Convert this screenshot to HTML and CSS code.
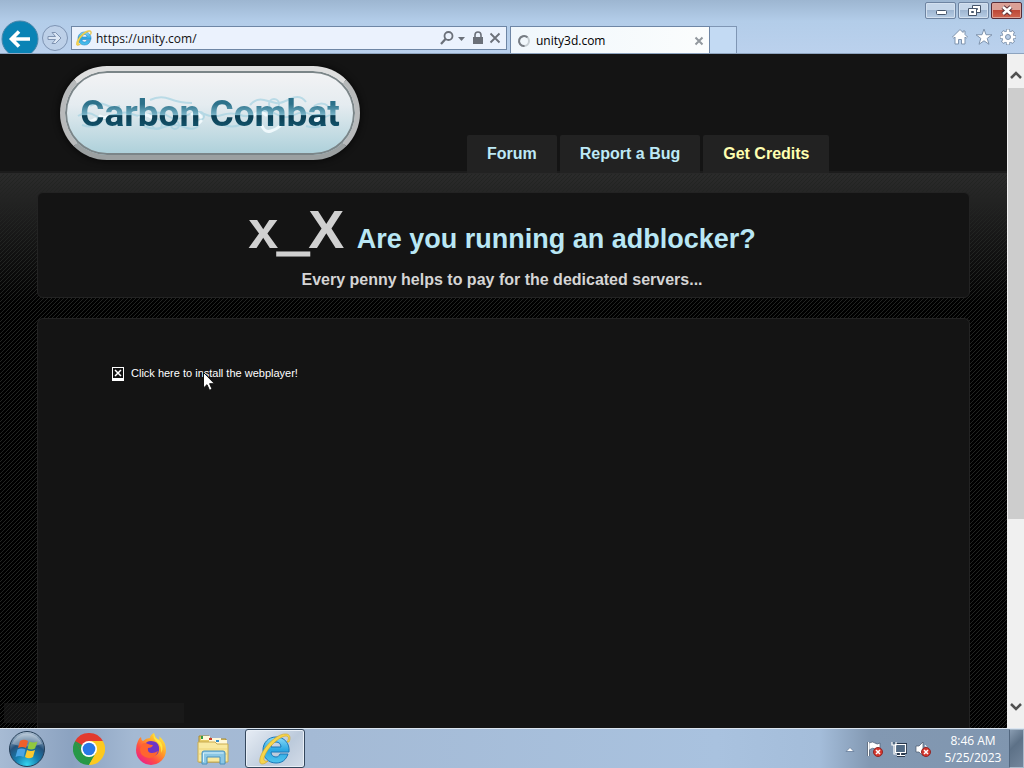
FILE: index.html
```html
<!DOCTYPE html>
<html lang="en">
  <head>
    <meta charset="UTF-8" />
    <meta name="viewport" content="width=device-width, initial-scale=1.0" />
    <title>unity3d.com</title>
    <link rel="stylesheet" href="styles.css">
  </head>
  <body>
    <!-- Browser window frame -->
    <header class="browser">
      <div class="window-buttons">
        <button class="win-btn" aria-label="Minimize">
          <svg width="28" height="15" viewBox="0 0 28 15"><rect x="9.500" y="7.500" width="10" height="4" rx="1" fill="#fff" stroke="#47566b" /></svg>
        </button>
        <button class="win-btn" aria-label="Restore">
          <svg width="28" height="15" viewBox="0 0 28 15" fill="#fff" stroke="#47566b"><path d="M12.500 2.500h8v7h-8z M15.500 5.500h2v1h-2z" fill-rule="evenodd" /><path d="M8.500 5.500h8v7h-8z M11.500 8.500h2v1h-2z" fill-rule="evenodd" /></svg>
        </button>
        <button class="win-btn close" aria-label="Close">
          <svg width="28" height="15" viewBox="0 0 28 15"><path d="M10 4l8 7M18 4l-8 7" stroke="#5d3338" stroke-width="4.500" /><path d="M10 4l8 7M18 4l-8 7" stroke="#fff" stroke-width="2.500" /></svg>
        </button>
      </div>

      <div class="toolbar">
        <button class="back" aria-label="Back">
          <svg width="38" height="38" viewBox="0 0 38 38"><circle cx="19" cy="19" r="18" fill="#0a83b5" stroke="#4a87aa" /><path d="M29 19H11M18 11.500L10.500 19l7.500 7.500" fill="none" stroke="#fff" stroke-width="3.600" /></svg>
        </button>
        <button class="forward" aria-label="Forward">
          <svg width="28" height="28" viewBox="0 0 28 28"><circle cx="14" cy="14" r="12.500" fill="#bdd0e8" stroke="#7e94b3" /><path d="M7 12.500h7.500l-3.500-4h3.500l5.500 5.500-5.500 5.500H11l3.500-4H7z" fill="#dce7f5" stroke="#7e92b0" /></svg>
        </button>

        <div class="address-bar">
          <svg width="16" height="16" viewBox="0 0 32 32"><use href="#ie" /></svg>
          <input type="text" class="address" aria-label="Address" value="https://unity.com/" />
          <button aria-label="Search"><svg width="16" height="16" viewBox="0 0 16 16"><circle cx="9.500" cy="6" r="4" fill="none" stroke="#6b7079" stroke-width="1.800" /><path d="M6.500 9L2 14" stroke="#6b7079" stroke-width="2.200" /></svg></button>
          <button aria-label="Show address list"><svg width="8" height="16" viewBox="0 0 8 16"><path d="M0 7h7l-3.500 4z" fill="#6b7079" /></svg></button>
          <button aria-label="Security report"><svg width="16" height="16" viewBox="0 0 16 16"><rect x="4" y="7" width="10" height="7" fill="#6b7079" /><path d="M6 8V5a3 3 0 0 1 6 0v3" fill="none" stroke="#6b7079" stroke-width="1.600" /></svg></button>
          <button aria-label="Stop"><svg width="14" height="16" viewBox="0 0 14 16"><path d="M2.500 3.500l9 9M11.500 3.500l-9 9" stroke="#6b7079" stroke-width="1.800" /></svg></button>
        </div>

        <div class="tab">
          <svg width="14" height="14" viewBox="0 0 14 14"><circle cx="7" cy="7" r="5" fill="none" stroke="#c6ced3" stroke-width="2" /><path d="M7.500 12A5 5 0 1 1 10.500 3.400" fill="none" stroke="#777d84" stroke-width="2" /></svg>
          <span class="tab-title">unity3d.com</span>
          <button aria-label="Close tab"><svg width="10" height="10" viewBox="0 0 10 10"><path d="M1.500 1.500l7 7M8.500 1.500l-7 7" stroke="#92989e" stroke-width="2" /></svg></button>
        </div>
        <button class="new-tab" aria-label="New tab"></button>

        <div class="tools">
          <button aria-label="Home"><svg width="18" height="18" viewBox="0 0 18 18"><path d="M9 1.500L1.500 9l1.300 1.200L4 9v7h3.500v-4.500h3V16H14V9l1.200 1.200L16.500 9 14 6.500V3h-2v1.500z" fill="#fff" stroke="#7e93ad" /></svg></button>
          <button aria-label="Favorites"><svg width="18" height="18" viewBox="0 0 18 18"><path d="M9 1l2 5.700 6 .1-4.800 3.600 1.800 5.900L9 12.800l-5 3.500 1.800-5.900L1 6.800l6-.1z" fill="#fff" stroke="#7e93ad" /></svg></button>
          <button aria-label="Tools"><svg width="18" height="18" viewBox="0 0 18 18"><g stroke="#7e93ad" stroke-width="4"><path d="M9 1v16M1 9h16M3.300 3.300l11.400 11.400M14.700 3.300L3.300 14.700" /></g><circle cx="9" cy="9" r="6" fill="#fff" stroke="#7e93ad" /><path d="M9 1.500v15M1.500 9h15M3.800 3.800l10.400 10.400M14.200 3.800L3.800 14.200" stroke="#fff" stroke-width="2.500" /><circle cx="9" cy="9" r="2.500" fill="#b9cde6" stroke="#7e93ad" /></svg></button>
        </div>
      </div>
    </header>

    <!-- Web page -->
    <div class="viewport">
      <main class="page">
        <div class="site-header">
          <a href="#" class="logo">
            <!-- water ripples around the name -->
            <svg class="splash" width="272" height="54" viewBox="0 0 272 54" fill="none">
              <g stroke="#9ccfe0" stroke-width="2" opacity=".6">
                <path d="M4 30q9-6 18 0t18 0 18-2 18 0 18 2 18 0 18-2 18 1 18 0 18-2 18 1 18 1 18 0 18 0" />
                <path d="M16 20q8-5 16-1t14 1M76 14q10-5 20-1t22 4M176 19q6-7 14-5t12 3 14-4 16 3M240 20q8-5 14 0" />
                <path d="M8 39q8 3 16 0M70 40q10 5 20 1t20 0 14-1M150 39q8 3 16 0M232 40q9 3 18-1" />
                <circle cx="83" cy="38" r="5" /><circle cx="101" cy="39" r="4" /><circle cx="126" cy="30" r="4" /><circle cx="200" cy="18" r="5" />
              </g>
              <g stroke="#f4fcff" stroke-width="3" stroke-linecap="round" opacity=".9">
                <path d="M10 32q6 6 11 1M26 30q5 3 8 0M66 31q6-4 11 0M118 28q6-3 9 3M124 38l3-3M180 29q7-5 12 0M236 34q6 3 10-2" />
                <path d="M188 40q3 7 9 5t9-5" />
              </g>
            </svg>
            <span class="logo-text">Carbon Combat</span>
          </a>
          <nav class="menu">
            <a href="#">Forum</a>
            <a href="#">Report a Bug</a>
            <a href="#" class="credits">Get Credits</a>
          </nav>
        </div>

        <div class="content">
          <section class="box notice">
            <h1><span class="face">x<span class="mouth">_</span>X</span> Are you running an adblocker?</h1>
            <p>Every penny helps to pay for the dedicated servers...</p>
          </section>
          <section class="box game">
            <a href="#" class="install">
              <svg width="12" height="14" viewBox="0 0 12 14"><rect width="12" height="14" fill="#fff" /><rect x="1" y="1" width="10" height="10" fill="#111" /><path d="M3 3l6 6M9 3l-6 6" stroke="#fff" stroke-width="1.500" /></svg>
              <span>Click here to install the webplayer!</span>
            </a>
          </section>
        </div>
        <div class="status-popup"></div>
      </main>

      <div class="scrollbar">
        <button aria-label="Scroll up"><svg width="12" height="8" viewBox="0 0 12 8"><path d="M1 7l5-5 5 5" fill="none" stroke="#505050" stroke-width="2.500" /></svg></button>
        <div class="track"><div class="thumb"></div></div>
        <button aria-label="Scroll down"><svg width="12" height="8" viewBox="0 0 12 8"><path d="M1 1l5 5 5-5" fill="none" stroke="#505050" stroke-width="2.500" /></svg></button>
      </div>
    </div>

    <!-- Taskbar -->
    <footer class="taskbar">
      <button class="start" aria-label="Start">
        <svg width="38" height="38" viewBox="0 0 38 38">
          <defs>
            <radialGradient id="orb" cx=".5" cy=".95" r=".95"><stop offset="0" stop-color="#35d5ef" /><stop offset=".35" stop-color="#177fb0" /><stop offset=".65" stop-color="#24527c" /><stop offset="1" stop-color="#b6c7d8" /></radialGradient>
          </defs>
          <circle cx="19" cy="19" r="17.500" fill="url(#orb)" stroke="#253e57" />
          <path d="M4 14a16 16 0 0 1 30 0q-14 5-30 0z" fill="#fff" opacity=".3" />
          <path d="M12 11q4-2.500 8 0l-2 7q-4-2-8 0z" fill="#ee602b" />
          <path d="M21.500 11.500q4 2 8 0l-2.500 7q-3.500 2-7.500 0z" fill="#91c83e" />
          <path d="M9.500 19.500q4-2 8 0l-2 7.500q-4-2-8 0z" fill="#4ba5e5" />
          <path d="M19 20q4 2 8 0l-2 7q-4 2.500-8 0z" fill="#fcc92f" />
        </svg>
      </button>

      <button class="task" aria-label="Google Chrome">
        <svg width="32" height="32" viewBox="0 0 32 32">
          <path d="M16 16L2.140 8A16 16 0 0 1 29.860 8z" fill="#e33b2e" />
          <path d="M16 16v16A16 16 0 0 1 2.140 8z" fill="#279847" />
          <path d="M16 16L29.860 8A16 16 0 0 1 16 32z" fill="#fcc91f" />
          <path d="M16 8h13.860L22.930 20z" fill="#fcc91f" />
          <path d="M22.930 20L16 32 9.070 20z" fill="#279847" />
          <path d="M9.070 20L2.140 8H16z" fill="#e33b2e" />
          <path d="M2.140 8L9.070 20H16l-7-8z" fill="#279847" />
          <path d="M22.930 20L16 32l8-2 5-10z" fill="#fcc91f" />
          <circle cx="16" cy="16" r="8" fill="#fff" /><circle cx="16" cy="16" r="6.300" fill="#2878e6" />
        </svg>
      </button>

      <button class="task" aria-label="Firefox">
        <svg width="32" height="32" viewBox="0 0 32 32">
          <defs>
            <linearGradient id="fox" x1=".85" y1=".1" x2=".2" y2=".9"><stop offset="0" stop-color="#ffe63d" /><stop offset=".4" stop-color="#ff9829" /><stop offset=".72" stop-color="#ff4b45" /><stop offset="1" stop-color="#ed2681" /></linearGradient>
          </defs>
          <path d="M3 8q1-3 3-4 0 3 2 4 3-3 7-3 0-3 4-5 1 5 5 7 1-2 0-4 7 6 7 14a15 15 0 0 1-30 0q0-5 2-9z" fill="url(#fox)" />
          <path d="M10 12q1-4 6-4 7 0 8 6 1 7-5 9-6 1-9-3-2-3-1-6 4 2 6-1-4 0-5-1z" fill="#6e35c7" />
          <path d="M7 11q3-2 6 0 2 1 5 1-1 3-5 3-1 5 4 5 3 0 6-2-2 7-9 7-9-1-9-9z" fill="#ff652f" />
          <path d="M19 0q-2 5 3 9 5 4 4 11 4-7-2-13-5-2-5-7z" fill="#ffe541" />
        </svg>
      </button>

      <button class="task" aria-label="Windows Explorer">
        <svg width="32" height="32" viewBox="0 0 32 32">
          <path d="M2 3h10l2 3h15v23H2z" fill="#e6ca65" stroke="#a88b34" />
          <rect x="4" y="3" width="9" height="4" fill="#fff8d8" /><rect x="4" y="3" width="2" height="3" fill="#319b43" />
          <rect x="12" y="5" width="12" height="4" fill="#fff8d8" /><rect x="12" y="5" width="3" height="2" fill="#ce3b28" />
          <rect x="19" y="7" width="11" height="4" fill="#fff8d8" /><rect x="19" y="7" width="3" height="2" fill="#358dc4" />
          <path d="M1 9h17l2 2h11v18H1z" fill="#f8e9a0" stroke="#c9ac50" />
          <path d="M2 16h28M2 21h28" stroke="#eed57a" />
          <path d="M5 31V20q0-2 2-2h19q2 0 2 2v11h-5v-7H10v7z" fill="#8bc7e4" stroke="#4990bd" />
          <path d="M6.500 29V20h20" fill="none" stroke="#d5f1fc" />
        </svg>
      </button>

      <button class="task active" aria-label="Internet Explorer">
        <svg width="32" height="32" viewBox="0 0 32 32">
          <defs>
            <linearGradient id="ieblue" x1="0" y1="0" x2="0" y2="1"><stop offset="0" stop-color="#8bdcf9" /><stop offset=".5" stop-color="#2ba7e2" /><stop offset="1" stop-color="#51c4ee" /></linearGradient>
            <g id="ie">
              <path d="M17 4C9 4 4 10 4 17s5 13 13 13c6 0 10-3 12-9h-8c-1 2-2 3-4 3-3 0-5-2-5-5h18C31 10 25 4 17 4zm-5 10c0-3 2-5 5-5s5 2 5 5z" fill="url(#ieblue)" stroke="#1977b8" stroke-width="1" />
              <path d="M30 9c2-4 1-8-3-8C20 0 8 10 3 20c-3 6-3 11 0 11 2 0 4-1 6-3-5 1-5-2-2-8C12 11 22 3 27 3c3 0 3 3 1 6z" fill="#f7d54b" stroke="#d0a321" stroke-width=".6" />
            </g>
          </defs>
          <use href="#ie" />
        </svg>
      </button>

      <div class="tray">
        <button aria-label="Show hidden icons"><svg width="10" height="16" viewBox="0 0 10 16"><path d="M1 10.500h8L5 6.500z" fill="#fff" stroke="#647b99" stroke-width=".8" /></svg></button>
        <button aria-label="Action Center"><svg width="16" height="16" viewBox="0 0 16 16"><path d="M1.500 1v14" stroke="#35465c" stroke-width="3" /><path d="M2 2q4-2 6 0t5 0v7q-3 1-5-1T2 9z" fill="#fff" stroke="#4c5c72" stroke-width=".7" /><path d="M1.500 1v14" stroke="#fff" stroke-width="1.500" /><circle cx="11" cy="11" r="4.500" fill="#d7382e" stroke="#8f2627" /><path d="M9 9l4 4M13 9l-4 4" stroke="#fff" stroke-width="1.500" /></svg></button>
        <button aria-label="Network"><svg width="16" height="16" viewBox="0 0 16 16"><path d="M4.500 3.500h10v8h-10zM9.500 12v2M6 14.500h8" fill="#6f8299" stroke="#28374b" stroke-width="3" /><path d="M4.500 3.500h10v8h-10zM9.500 12v2M6 14.500h8M1 1v3h4V1M3 4v9h3" fill="#526a84" stroke="#fff" stroke-width="1.200" /></svg></button>
        <button aria-label="Volume"><svg width="16" height="16" viewBox="0 0 16 16"><path d="M1 5h3l4-4v14l-4-4H1z" fill="#fff" stroke="#47566b" stroke-width=".7" /><path d="M10 4q2 2 2 5" fill="none" stroke="#fff" /><circle cx="11" cy="11" r="4.500" fill="#d7382e" stroke="#8f2627" /><path d="M9 9l4 4M13 9l-4 4" stroke="#fff" stroke-width="1.500" /></svg></button>
      </div>
      <div class="clock"><span>8:46 AM</span><span>5/25/2023</span></div>
      <button class="show-desktop" aria-label="Show desktop"></button>
    </footer>

    <svg class="cursor" width="12" height="19" viewBox="0 0 12 19"><path d="M.5.500v15.500l3.500-3.300 2.500 5.600 2.600-1.100-2.500-5.500h4.900z" fill="#fff" stroke="#111" /></svg>
  </body>
</html>
```
FILE: styles.css
```css
* {
  margin: 0;
  padding: 0;
  box-sizing: border-box;
}

body {
  display: flex;
  flex-direction: column;
  height: 100vh;
  overflow: hidden;
  font-family: "Open Sans", "Noto Sans", sans-serif;
  font-size: 12px;
  background: #000;
}

button {
  display: flex;
  align-items: center;
  justify-content: center;
  border: none;
  background: none;
  font: inherit;
}

svg {
  display: block;
  flex-shrink: 0;
}

a {
  text-decoration: none;
}

/* Browser frame */
.browser {
  height: 54px;
  flex-shrink: 0;
  overflow: hidden;
  background: linear-gradient(#9db6d1, #b3cde9 40%, #bbd1ed);
  border-bottom: 1px solid #8ea4bf;
}

.window-buttons {
  display: flex;
  justify-content: flex-end;
  gap: 2px;
  height: 20px;
  padding: 2px 2px 0 0;
}

.win-btn {
  width: 31px;
  height: 17px;
  border: 1px solid #6e84a1;
  border-radius: 2px;
  background: linear-gradient(#c5d6e9 45%, #9fb6d1 50%, #b7cde5);
  box-shadow: inset 0 0 0 1px #d3e0ef;
}

.win-btn.close {
  border-color: #572c37;
  background: linear-gradient(#dba096 45%, #bd4838 50%, #cf6550);
  box-shadow: inset 0 0 0 1px #dda499;
}

.toolbar {
  display: flex;
  align-items: flex-start;
}

.back {
  width: 38px;
  margin-left: 1px;
}

.forward {
  width: 30px;
  height: 36px;
  margin-left: 1px;
}

.address-bar {
  display: flex;
  align-items: center;
  flex: 1;
  height: 24px;
  margin: 6px 3px 0 1px;
  padding: 0 4px;
  gap: 4px;
  background: #ebf2fd;
  border: 1px solid #6e86a5;
}

.address-bar button {
  margin-left: -1px;
}

.address {
  flex: 1;
  min-width: 0;
  border: none;
  outline: none;
  background: none;
  font: inherit;
  color: #111;
}

.tab {
  display: flex;
  align-items: center;
  width: 200px;
  height: 28px;
  margin-top: 6px;
  padding: 0 5px 0 6px;
  gap: 5px;
  background: linear-gradient(to right, #f0f7fc, #fbfdfd);
  border: 1px solid #6e86a5;
  border-bottom: none;
}

.tab-title {
  flex: 1;
}

.new-tab {
  width: 27px;
  height: 28px;
  margin-top: 6px;
  background: #c3daf3;
  border: 1px solid #7f96b4;
  border-width: 1px 1px 0 0;
}

.tools {
  display: flex;
  justify-content: flex-end;
  gap: 6px;
  width: 287px;
  padding: 8px 7px 0 0;
}

/* Page area */
.viewport {
  display: flex;
  flex: 1;
  min-height: 0;
}

.page {
  position: relative;
  display: flex;
  flex-direction: column;
  flex: 1;
  overflow: hidden;
  font-family: "Liberation Sans", Arial, sans-serif;
  background:
    linear-gradient(135deg, transparent 44%, #222422 44%, #222422 56%, transparent 56%) 0 0 / 4px 4px,
    linear-gradient(#2b2b2b 120px, #222 150px, #000 250px);
}

.site-header {
  display: flex;
  justify-content: flex-start;
  align-items: flex-end;
  height: 120px;
  padding-left: 60px;
  background: #141414;
  border-bottom: 1px solid #292929;
  box-shadow: inset 0 -2px #1c1c1c;
}

/* Pill shaped logo */
.logo {
  position: relative;
  display: flex;
  align-items: center;
  justify-content: center;
  width: 300px;
  height: 94px;
  margin-bottom: 13px;
  border: 5px solid #b8babb;
  border-top-color: #dedede;
  border-bottom-color: #9ba0a1;
  border-radius: 47px;
  background: linear-gradient(#f3f3f5, #e5ecf0 40%, #acd0da);
  box-shadow: inset 0 0 0 2px #7b8588, 0 0 7px #050505;
}

.splash {
  position: absolute;
}

.logo-text {
  position: relative;
  font-family: Roboto, sans-serif;
  font-size: 37px;
  font-weight: bold;
  color: transparent;
  background: linear-gradient(#2c718a 28%, #77b2c6 53%, #0b3c51 55%, #115169 78%);
  background-clip: text;
}

.menu {
  display: flex;
  gap: 3px;
  margin-left: 107px;
}

.menu a {
  padding: 0 20px;
  line-height: 38px;
  font-size: 16px;
  font-weight: bold;
  color: #bde9f6;
  background: #222;
  border-radius: 2px 2px 0 0;
}

.menu a.credits {
  color: #ffffb0;
}

.content {
  display: flex;
  flex-direction: column;
  flex: 1;
  gap: 20px;
  padding: 18px 37px 0;
}

.box {
  background: #141414;
  border: 1px solid #232323;
  border-radius: 6px;
}

.notice {
  height: 106px;
  padding: 5px 3px 0 0;
  text-align: center;
  color: #d5d5d5;
}

.notice h1 {
  font-size: 27px;
  line-height: 62px;
  color: #b9e7f4;
}

.notice .face {
  margin-right: 6px;
  font-size: 54px;
  color: #d0d0d0;
}

.notice .mouth {
  -webkit-text-stroke: 3px #d0d0d0;
}

.notice p {
  font-size: 16px;
  font-weight: bold;
  line-height: 20px;
}

.game {
  flex: 1;
  padding: 46px 74px;
  border-bottom: none;
  border-radius: 6px 6px 0 0;
}

.install {
  display: inline-flex;
  align-items: flex-end;
  gap: 7px;
  font-size: 11px;
  line-height: 16px;
  color: #fff;
}

.status-popup {
  position: absolute;
  left: 4px;
  bottom: 5px;
  width: 180px;
  height: 20px;
  background: rgba(28, 28, 28, 0.6);
}

/* Scrollbar */
.scrollbar {
  display: flex;
  flex-direction: column;
  width: 17px;
  background: #f0f0f0;
}

.scrollbar button {
  height: 34px;
  padding-top: 8px;
}

.scrollbar button:last-child {
  height: 42px;
  padding-top: 0;
}

.track {
  flex: 1;
}

.thumb {
  height: 72%;
  margin-left: 1px;
  background: #cdcdcd;
}

/* Taskbar */
.taskbar {
  display: flex;
  flex-shrink: 0;
  gap: 2px;
  height: 40px;
  color: #fff;
  background: linear-gradient(to right, #a7bbd4, #8ba2c0 7%, #a4b9d3 13%, #a4bad5 30%, #a9c2df 70%, #a4bdda 80%, #8298b2 85%, #8096af);
  border-top: 1px solid #dbe5f0;
}

.start {
  width: 54px;
  margin-right: 3px;
}

.task {
  width: 60px;
  height: 39px;
}

.task.active {
  border: 1px solid #34475d;
  border-radius: 3px;
  background: linear-gradient(135deg, #e7edf5, #bccadb 60%, #d3dce8);
  box-shadow: inset 0 0 0 1px #e8eff7;
}

.tray {
  display: flex;
  align-items: center;
  gap: 8px;
  margin-left: auto;
}

.tray button:first-child {
  margin-right: 4px;
}

.clock {
  display: flex;
  flex-direction: column;
  justify-content: center;
  width: 74px;
  padding-left: 6px;
  line-height: 17px;
  text-align: center;
}

.show-desktop {
  width: 15px;
  border: 1px solid #a9bacb;
  border-left-color: #52677f;
  background: linear-gradient(135deg, #899cb1, #5d7187 40%, #73869c);
}

/* Mouse pointer over the page */
.cursor {
  position: absolute;
  left: 203px;
  top: 372px;
}
```
